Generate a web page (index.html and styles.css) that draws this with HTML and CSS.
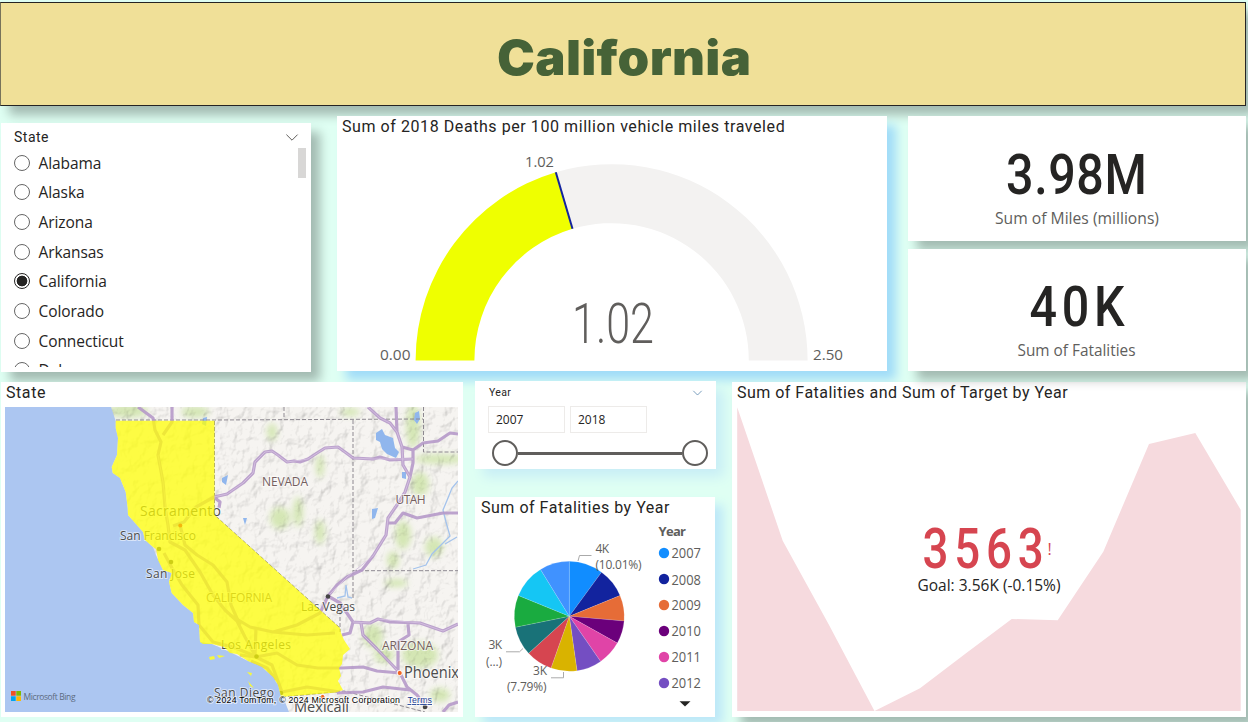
FILE: index.html
```html
<!DOCTYPE html>
<html lang="en">
<head>
<meta charset="utf-8">
<title>California</title>
<link rel="stylesheet" href="styles.css">
</head>
<body>
<header class="banner"><h1 class="banner-title">California</h1></header>

<main>
<section class="row row-top">
  <article class="panel slicer">
    <div class="slicer-head">
      <span>State</span>
      <svg class="chevron" viewBox="0 0 12 7"><path d="M.4.6 6 6.2 11.6.6"/></svg>
    </div>
    <div class="slicer-body">
      <ul class="options">
        <li><i class="radio"></i>Alabama</li>
        <li><i class="radio"></i>Alaska</li>
        <li><i class="radio"></i>Arizona</li>
        <li><i class="radio"></i>Arkansas</li>
        <li><i class="radio radio-on"></i>California</li>
        <li><i class="radio"></i>Colorado</li>
        <li><i class="radio"></i>Connecticut</li>
        <li><i class="radio"></i>Delaware</li>
      </ul>
      <div class="scroll-thumb"></div>
    </div>
  </article>

  <article class="panel gauge">
    <h2 class="title gauge-title">Sum of 2018 Deaths per 100 million vehicle miles traveled</h2>
    <svg class="chart" viewBox="337 140 550 231">
      <path fill="#f3f2f1" d="M555.8 172.3A196 196 0 0 1 807.6 360.4H748.8A137.3 137.3 0 0 0 572.5 228.8Z"/>
      <path fill="#efff00" d="M415.6 360.4A196 196 0 0 1 555.8 172.3L572.5 228.8A137.3 137.3 0 0 0 474.4 360.4Z"/>
      <path stroke="#12239e" stroke-width="2" d="M555.8 172.3 572.5 228.8"/>
      <g class="gauge-label">
        <text x="525" y="167" textLength="29" lengthAdjust="spacingAndGlyphs">1.02</text>
        <text x="380" y="360" textLength="30.5" lengthAdjust="spacingAndGlyphs">0.00</text>
        <text x="813" y="360" textLength="30" lengthAdjust="spacingAndGlyphs">2.50</text>
      </g>
      <text class="gauge-value" x="572" y="343" textLength="82" lengthAdjust="spacingAndGlyphs">1.02</text>
    </svg>
  </article>

  <div class="cards">
    <article class="panel card">
      <svg class="chart" viewBox="908 116 338 125">
        <text class="card-value" transform="translate(1006 194) scale(.88 1)" textLength="160">3.98M</text>
        <text class="card-label" x="995" y="224" textLength="164" lengthAdjust="spacingAndGlyphs">Sum of Miles (millions)</text>
      </svg>
    </article>
    <article class="panel card">
      <svg class="chart" viewBox="908 249 338 122">
        <text class="card-value" transform="translate(1029.5 325.500) scale(.88 1)" textLength="108">40K</text>
        <text class="card-label" x="1017.500" y="356" textLength="118" lengthAdjust="spacingAndGlyphs">Sum of Fatalities</text>
      </svg>
    </article>
  </div>
</section>

<section class="row row-bottom">
  <article class="panel map">
    <h2 class="title">State</h2>
    <svg class="map-canvas" viewBox="5 407 453 305">
      <defs>
        <filter id="relief" x="0" y="0" width="1" height="1">
          <feTurbulence type="fractalNoise" baseFrequency=".085 .07" numOctaves="4" seed="8" result="n"/>
          <feDiffuseLighting in="n" surfaceScale="3.6" diffuseConstant="1.18" lighting-color="#fff">
            <feDistantLight azimuth="225" elevation="58"/>
          </feDiffuseLighting>
          <feComposite in2="SourceGraphic" operator="in"/>
        </filter>
        <filter id="soft" x="-.5" y="-.5" width="2" height="2"><feGaussianBlur stdDeviation="3"/></filter>
        <clipPath id="land"><path d="M111 407 115.700 421 115.700 428 118 438 117 455 111.700 467 112.700 473 120 478 125.700 492 127.700 508 128 515 143 532 145 540 153 547 156 555 163 570 171.700 573 169 582 171.700 593 183 605 193 613 194 622 199 625 200 642 212 644 230 652 248 661 262 667 273 677 278 685 281 695 285 702 289 712H458V407Z"/></clipPath>
      </defs>
      <rect x="5" y="407" width="453" height="305" fill="#acc6f1"/>
      <g clip-path="url(#land)">
        <rect x="5" y="407" width="453" height="305" fill="#f6f4f1"/>
        <g class="forest" filter="url(#soft)">
          <ellipse cx="128" cy="411" rx="20" ry="7"/><ellipse cx="195" cy="412" rx="14" ry="6"/>
          <ellipse cx="272" cy="432" rx="5" ry="9"/><ellipse cx="280" cy="518" rx="10" ry="11"/>
          <ellipse cx="298" cy="512" rx="5" ry="15"/><ellipse cx="320" cy="532" rx="5" ry="12"/>
          <ellipse cx="320" cy="466" rx="4" ry="12"/><ellipse cx="350" cy="412" rx="10" ry="4"/>
          <ellipse cx="413" cy="426" rx="7" ry="22"/><ellipse cx="440" cy="459" rx="26" ry="5"/>
          <ellipse cx="420" cy="484" rx="9" ry="12"/><ellipse cx="403" cy="535" rx="8" ry="14"/>
          <ellipse cx="393" cy="560" rx="6" ry="9"/><ellipse cx="434" cy="547" rx="9" ry="10"/>
          <ellipse cx="373" cy="636" rx="10" ry="12"/><ellipse cx="420" cy="655" rx="18" ry="13"/>
          <ellipse cx="384" cy="655" rx="10" ry="8"/><ellipse cx="440" cy="695" rx="10" ry="7"/>
          <ellipse cx="396" cy="583" rx="12" ry="4"/>
        </g>
        <rect class="relief" x="105" y="407" width="353" height="305" fill="#fff" filter="url(#relief)"/>
        <g fill="#90b6ed">
          <path d="M376 433 382 429 385 435 393 438 395 448 399 452 396 458 387 454 382 449 380 442 376 440Z"/>
          <path d="M415 413 419 411 420 419 417 424 414 420ZM372 509 378 508 375 518 372 519ZM402 472 406 472 406 479 402 478ZM203 418 207 417 206 426 202 424ZM222 478 228 475 226 485 222 482ZM243 518 247 518 245 525Z"/>
        </g>
        <path class="water-line" d="M458 481 452 488 448 498 443 510 446 522 450 536 441 545 432 554 426 565 413 569M337 598 345 596 346 585 348 597 352 598M457 537 445 544"/>
        <g class="border-line">
          <path d="M116 420H214.500L423 419M284 407V419M353 420V598M423.500 407V452H458M214.500 421V515L340 628M353 570.700H458M340 605V632"/>
          <path d="M282 697 344 691 425 712"/>
        </g>
        <g class="road">
          <path d="M173 526 184 522 196 507 214 497 227 494 243 483 253 473 255 462 265 452 272 451 278 455 287 462 294 461 300 462 308 459 317 453 325 448 338 447 345 452 353 458 373 459 380 457 390 460 413 459"/>
          <path d="M368 407 380 418 390 423 397 432 402 447 403 465 410 477 405 492 397 505 388 518 386 535 373 556 362 570 347 577 337 585 328 596M396 407 397 432M402 447 413 450 423 443 438 441 450 433 458 434M413 450 413 463 410 477M388 523 395 523 403 513 417 518 443 513 458 513"/>
          <path d="M342 635 350 633 353 622 370 623 378 619 390 622 420 623 443 631 458 624M328 596 340 603 353 622M361 623 363 635 377 649 398 671M398 673 398 642 409 635 408 624M342 668 363 667 377 671 400 673 407 687 417 695 427 708M337 693 363 692 383 687 410 690M443 712 449 705 458 702"/>
          <path d="M138 407 153 418 155 430 161 442 158 455 163 482 165 508 168 525 170 542 185 550 200 572 213 595 225 610 237 621 245 637 255 655M172 407 172 422 163 435M180 525 185 545 197 555 213 565 227 582 231 605 240 625M164 553 172 568 182 585 198 605 199 625 213 642 233 647 255 656"/>
          <path d="M230 615 250 627 273 632 307 635 335 633M273 632 297 625 320 613 328 596M240 655 256 657 277 653 297 665 318 668 342 668M256 657 272 665 282 692M282 692 307 687 340 692M256 627 255 656M251 661 267 668 276 680M214 497 220 502 219 508"/>
        </g>
        <path class="road-core" d="M214 497 227 494 243 483 253 473 255 462 265 452 272 451 287 462 308 459 325 448 338 447 353 458 373 459 413 459M368 407 380 418 390 423 397 432 402 447 403 465 410 477 405 492 388 518 386 535 373 556 347 577 328 596M353 622 370 623 378 619 420 623 443 631 458 624M361 623 363 635 377 649 398 671M158 455 163 482 168 525 170 542"/>
        <g fill="#444"><circle cx="328" cy="596.500" r="2.300"/><circle cx="159" cy="549" r="2.300"/><circle cx="171" cy="562" r="2.300"/><circle cx="256.500" cy="656.500" r="2.300"/><circle cx="281" cy="693" r="2.300"/><circle cx="425" cy="707" r="2.300"/></g>
      </g>
      <g class="city">
        <text x="140" y="516" font-size="14" textLength="81">Sacramento</text>
        <text x="120" y="539.500" textLength="76">San Francisco</text>
        <text x="146" y="578" textLength="49">San Jose</text>
        <text x="301" y="610.500" textLength="54">Las Vegas</text>
        <text x="221" y="649" textLength="70">Los Angeles</text>
        <text x="214" y="697" textLength="60">San Diego</text>
        <text x="404" y="678" font-size="15.500" textLength="55" lengthAdjust="spacingAndGlyphs">Phoenix</text>
        <text x="294" y="711.500" font-size="14.500" textLength="55" lengthAdjust="spacingAndGlyphs">Mexicali</text>
      </g>
      <g class="region">
        <text x="262" y="486" textLength="46">NEVADA</text>
        <text x="395.500" y="504" textLength="30">UTAH</text>
        <text x="206" y="602" textLength="66">CALIFORNIA</text>
        <text x="382" y="650" textLength="51">ARIZONA</text>
      </g>
      <g fill="#f26522" stroke="#fff"><circle cx="399.700" cy="673" r="2.600"/><circle cx="322.500" cy="697" r="2.600"/></g>
      <path class="state-shape" d="M115.700 420.700H214.500V515L340 628 341 633 344 640 350 649 343 655 342 664 339 668 341 676 338 681 343 690 336 692.500 281 697 278 685 273 677 262 667 248 661 237 654 230 653 224 647 212 644 203 644 200 642 199 625 194 622 193 613 183 605 171.700 593 169 582 171.700 573 163 570 158 560 156 549 153 547 145 540 143 532 128 515 127.700 508 125.700 492 120 478 112.700 473 111.700 467 117 455 118 438 115.700 428Z"/>
      <g fill="#f6f83c"><path d="M209 657 214 656 215 659 210 660ZM217 655 225 656 219 658ZM247 672 252 673 251 676ZM248 681 254 688 250 686Z"/></g>
      <circle cx="180.300" cy="525.500" r="2" fill="#f5b60c"/>
      <path fill="#f25022" d="M11 691h4.700v4.700H11z"/><path fill="#7fba00" d="M16.300 691H21v4.700h-4.700z"/>
      <path fill="#00a4ef" d="M11 696.300h4.700v4.700H11z"/><path fill="#ffb900" d="M16.300 696.300H21v4.700h-4.700z"/>
      <text class="bing" x="23.500" y="700" textLength="52">Microsoft Bing</text>
      <text class="credit" x="207" y="703" textLength="193">© 2024 TomTom, © 2024 Microsoft Corporation</text>
      <text class="credit credit-link" x="407.500" y="703" textLength="24.500">Terms</text>
    </svg>
  </article>

  <div class="middle">
    <article class="panel range">
      <div class="range-head">
        <span>Year</span>
        <svg class="chevron chevron-blue" viewBox="0 0 12 7"><path d="M.4.6 6 6.2 11.6.6"/></svg>
      </div>
      <div class="range-inputs"><span>2007</span><span>2018</span></div>
      <div class="slider"><i class="knob"></i><i class="track"></i><i class="knob"></i></div>
    </article>

    <article class="panel pie">
      <h2 class="title">Sum of Fatalities by Year</h2>
      <svg class="chart" viewBox="475 518 240 199">
        <g class="slices">
          <path fill="#118dff" d="M569.300 616.300V561.300A55 55 0 0 1 601.500 572.300Z"/>
          <path fill="#12239e" d="M569.300 616.300 601.500 572.300A55 55 0 0 1 620 595.500Z"/>
          <path fill="#e66c37" d="M569.300 616.300 620 595.500A55 55 0 0 1 624.100 621Z"/>
          <path fill="#6b007b" d="M569.300 616.300 624.100 621A55 55 0 0 1 617.300 643.100Z"/>
          <path fill="#e044a7" d="M569.300 616.300 617.300 643.100A55 55 0 0 1 600.600 661.400Z"/>
          <path fill="#744ec2" d="M569.300 616.300 600.600 661.400A55 55 0 0 1 577 670.800Z"/>
          <path fill="#d9b300" d="M569.300 616.300 577 670.800A55 55 0 0 1 551 668.100Z"/>
          <path fill="#d64550" d="M569.300 616.300 551 668.100A55 55 0 0 1 528.600 653.300Z"/>
          <path fill="#197278" d="M569.300 616.300 528.600 653.300A55 55 0 0 1 515.400 627.200Z"/>
          <path fill="#1aab40" d="M569.300 616.300 515.400 627.200A55 55 0 0 1 518.400 595.500Z"/>
          <path fill="#15c6f4" d="M569.300 616.300 518.400 595.500A55 55 0 0 1 540.500 569.400Z"/>
          <path fill="#4092ff" d="M569.300 616.300 540.500 569.400A55 55 0 0 1 569.300 561.300Z"/>
        </g>
        <path class="leader" d="M578 561 579.500 555.500H591.500M506 651.800H519.500L523 648.500M551 677.800H563.500V672"/>
        <g class="pie-label">
          <text x="595.500" y="553" textLength="13.500">4K</text>
          <text x="595.500" y="569" textLength="46">(10.01%)</text>
          <text x="488.500" y="649" textLength="13.500">3K</text>
          <text x="486" y="665.500" textLength="16">(...)</text>
          <text x="533" y="675" textLength="14">3K</text>
          <text x="507" y="691" textLength="39.500">(7.79%)</text>
        </g>
        <g class="legend">
          <text class="legend-title" x="658.500" y="536" textLength="27.500">Year</text>
          <circle cx="664" cy="553" r="5.200" fill="#118dff"/><text x="671.500" y="558" textLength="29.500" lengthAdjust="spacingAndGlyphs">2007</text>
          <circle cx="664" cy="579" r="5.200" fill="#12239e"/><text x="671.500" y="585" textLength="29.500" lengthAdjust="spacingAndGlyphs">2008</text>
          <circle cx="664" cy="605" r="5.200" fill="#e66c37"/><text x="671.500" y="610" textLength="29.500" lengthAdjust="spacingAndGlyphs">2009</text>
          <circle cx="664" cy="631" r="5.200" fill="#6b007b"/><text x="671.500" y="636" textLength="29.500" lengthAdjust="spacingAndGlyphs">2010</text>
          <circle cx="664" cy="657" r="5.200" fill="#e044a7"/><text x="671.500" y="662" textLength="29.500" lengthAdjust="spacingAndGlyphs">2011</text>
          <circle cx="664" cy="683" r="5.200" fill="#744ec2"/><text x="671.500" y="688" textLength="29.500" lengthAdjust="spacingAndGlyphs">2012</text>
          <path fill="#252423" d="M679.500 701.200H690.500L685 706.500Z"/>
        </g>
      </svg>
    </article>
  </div>

  <article class="panel kpi">
    <h2 class="title">Sum of Fatalities and Sum of Target by Year</h2>
    <svg class="chart" viewBox="732 405 514 312">
      <path fill="#f6dade" d="M737.200 407.300 782.700 540.700 828.500 624 874.500 711 920 688.300 966 653.300 1011.700 619 1057.700 620.300 1103.300 551.700 1149 444 1195.300 433 1240.700 509.700V711H737.200Z"/>
      <text class="kpi-value" transform="translate(922.500 568) scale(.83 1)" textLength="146">3563</text>
      <text class="kpi-mark" x="1047.500" y="555">!</text>
      <text class="kpi-goal" x="917.500" y="591" textLength="143" lengthAdjust="spacingAndGlyphs">Goal: 3.56K (-0.15%)</text>
    </svg>
  </article>
</section>
</main>
</body>
</html>
```

FILE: styles.css
```css
* { box-sizing: border-box; }
html, body { margin: 0; }
body {
  width: 1248px;
  height: 722px;
  overflow: hidden;
  padding-top: 2px;
  background: #dffff3;
  font-family: "Open Sans", "Noto Sans", sans-serif;
  color: #252423;
}
svg { display: block; overflow: visible; }

.banner {
  width: 1246px;
  height: 104px;
  display: flex;
  align-items: center;
  justify-content: center;
  background: #f0e098;
  border: 1px solid #252423;
  border-left-color: #77735a;
  box-shadow: 9px 9px 10px rgba(0, 0, 0, .27);
}
.banner-title {
  margin: 8px 0 0 3px;
  font: 900 48px/1 Inter, sans-serif;
  letter-spacing: .3px;
  transform: scaleX(1.058);
  color: #466237;
}

.row { display: flex; align-items: flex-start; }
.row-top { margin-top: 10px; height: 256px; }
.row-bottom { margin-top: 9px; }
.panel { background: #fff; flex: none; }
.chart { width: 100%; }
.title {
  margin: 0;
  padding-left: 5px;
  font: 400 16px/21px Roboto, sans-serif;
  letter-spacing: .57px;
  white-space: nowrap;
}
.chevron { width: 12px; height: 7px; fill: none; stroke: #605e5c; stroke-width: 1; }
.chevron-blue { width: 9px; height: 6px; stroke: #4f7fa8; }

/* state slicer */
.slicer {
  width: 310px;
  height: 249px;
  margin: 7px 26px 0 1px;
  box-shadow: 9px 9px 10px rgba(0, 0, 0, .27);
}
.slicer-head {
  height: 25px;
  display: flex;
  justify-content: space-between;
  align-items: center;
  padding: 3px 13px 0;
  font: 14px/22px Roboto, sans-serif;
  letter-spacing: .5px;
}
.slicer-body { height: 219px; display: flex; justify-content: space-between; overflow: hidden; }
.options { list-style: none; margin: 0; padding: 0 0 0 13px; }
.options li {
  height: 29.670px;
  display: flex;
  align-items: center;
  gap: 8.500px;
  font-size: 15.500px;
  letter-spacing: -.08px;
}
.radio {
  width: 16px;
  height: 16px;
  border: 1px solid #666;
  border-radius: 50%;
}
.radio-on { border-color: #252423; background: radial-gradient(circle, #252423 5px, #fff 5.700px); }
.scroll-thumb { width: 8px; height: 30px; margin-right: 5px; background: #d8d7d6; }

/* gauge */
.gauge { width: 550px; height: 255px; margin-right: 21px; box-shadow: 9px 9px 10px #a0dcf8; }
.gauge-title { height: 24px; }
.gauge-label { font-size: 15px; fill: #605e5c; }
.gauge-value { font: 300 55px Roboto, sans-serif; fill: #605e5c; }

/* cards */
.cards { display: grid; gap: 8px; position: relative; z-index: 1; }
.card { width: 338px; box-shadow: 9px 9px 10px rgba(0, 0, 0, .27); }
.card-value { font: 500 55px Roboto, sans-serif; fill: #252423; }
.card-label { font-size: 15.500px; fill: #605e5c; }

/* map */
.map { width: 462px; height: 335px; margin: 1px 12px 0 1px; }
.map .title { height: 25px; }
.map-canvas { width: 453px; height: 305px; margin-left: 4px; overflow: hidden; }
.forest { fill: #c9e2a0; opacity: .75; }
.relief { mix-blend-mode: multiply; opacity: .45; }
.road { fill: none; stroke: #b598c9; stroke-width: 3.200; stroke-linejoin: round; opacity: .88; }
.road-core { fill: none; stroke: #d4bfe0; stroke-width: .9; stroke-linejoin: round; }
.water-line { fill: none; stroke: #a4c3ec; stroke-width: 1.300; }
.border-line { fill: none; stroke: #8d8890; stroke-width: 1; stroke-dasharray: 4 2; }
.city, .region { font-size: 12px; fill: #4c4c4c; paint-order: stroke; stroke: #ffffff8c; stroke-width: 2px; }
.region { fill: #75605f; }
.state-shape { fill: #ffff05; fill-opacity: .74; }
.bing { font-size: 8.500px; fill: #5d6b80; }
.credit { font: 8.800px "Liberation Sans", sans-serif; fill: #000; paint-order: stroke; stroke: #ffffff99; stroke-width: 2px; }
.credit-link { fill: #1c3f94; text-decoration: underline; }

/* year range */
.middle { width: 241px; margin-right: 16px; display: grid; gap: 28px; }
.range { height: 88px; padding: 4px 8px 0 13px; box-shadow: 8px 8px 12px #c8eef6; }
.range-head {
  display: flex;
  justify-content: space-between;
  align-items: center;
  height: 14px;
  padding: 1px 6px 0 1px;
  font: 10.500px/14px Roboto, sans-serif;
  letter-spacing: .3px;
}
.range-inputs { display: flex; gap: 5px; margin-top: 7px; }
.range-inputs span {
  width: 77px;
  height: 27px;
  padding-left: 7px;
  border: 1px solid #edebe9;
  font-size: 12px;
  line-height: 25px;
}
.slider { display: flex; align-items: center; margin: 7px 0 0 4px; width: 216px; }
.knob { width: 26px; height: 26px; border: 2px solid #605e5c; border-radius: 50%; }
.track { flex: 1; height: 3px; background: #605e5c; }

/* pie */
.pie { width: 240px; height: 220px; box-shadow: 8px 8px 10px #bde8f8; }
.pie .title { height: 21px; padding-left: 6px; letter-spacing: .52px; }
.slices { stroke: #ffffff55; stroke-width: .4; }
.leader { fill: none; stroke: #aaa; stroke-width: 1; }
.pie-label { font-size: 12px; fill: #605e5c; }
.legend { font-size: 14px; fill: #605e5c; }
.legend-title { font-weight: 700; font-size: 13px; }

/* kpi */
.kpi { width: 514px; height: 335px; margin-top: 1px; box-shadow: 9px 9px 10px rgba(0, 0, 0, .27); }
.kpi .title { height: 23px; letter-spacing: .48px; }
.kpi-value { font: 500 55px Roboto, sans-serif; fill: #d64550; }
.kpi-mark { font-size: 16px; fill: #d64550; }
.kpi-goal { font-size: 15.500px; fill: #252423; }
```
